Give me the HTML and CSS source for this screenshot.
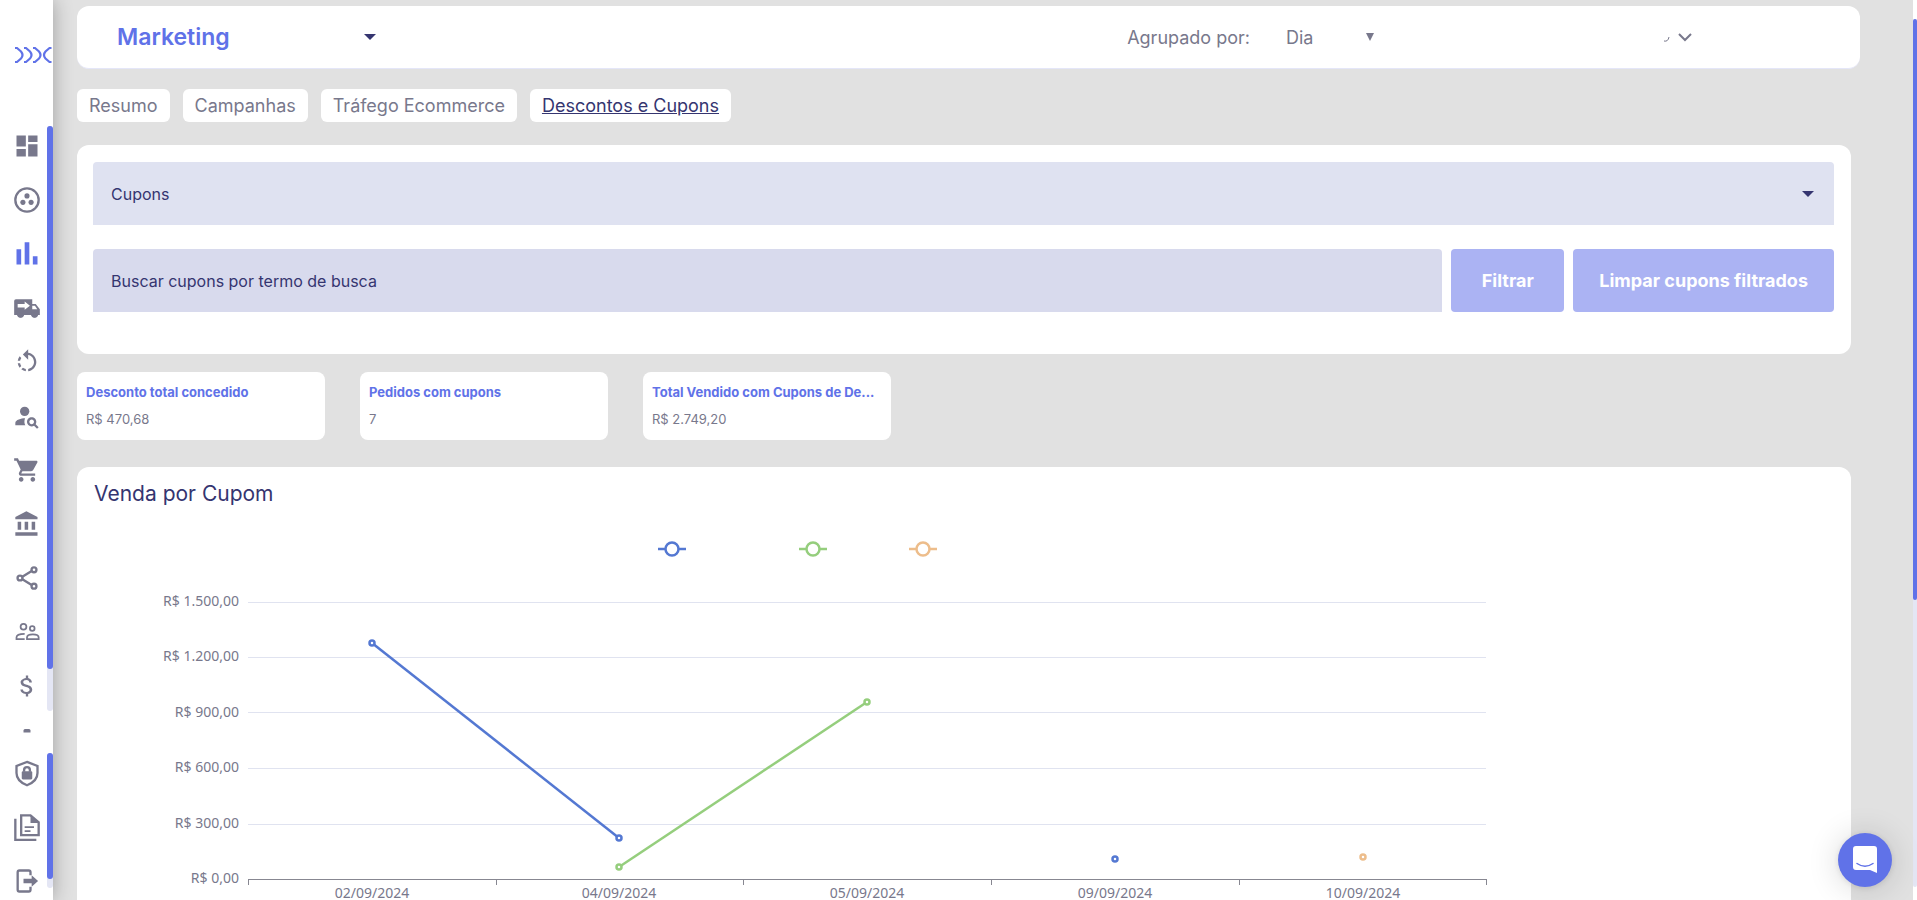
FILE: index.html
```html
<!DOCTYPE html>
<html lang="pt-BR">
<head>
    <meta charset="UTF-8">
    <meta name="viewport" content="width=device-width, initial-scale=1.0">
    <title>Marketing</title>
    <link rel="stylesheet" href="styles.css">
</head>
<body>
    <div class="page">
        <aside class="sidebar">
            <a class="logo" href="#" aria-label="Home">
                <svg width="38" height="18" viewBox="0 0 38 18" fill="none" stroke="#6072e8" stroke-width="2.200"><path d="M0 2h2l4 3.500q3 3.500 0 7L2 16H0M9 2h2l4 3.500q3 3.500 0 7L11 16H9M18 2h2l4 3.500q3 3.500 0 7L20 16h-2M36.500 2h-2l-4 3.500q-3 3.500 0 7l4 3.500h2"/></svg>
            </a>
            <nav class="menu menu-main">
                <div class="menu-items">
                    <a href="#" aria-label="Dashboard"><svg viewBox="0 0 24 24"><path d="M3 12.500h8V3H3zM3 21h8v-6.500H3zM13 21h8V10.500h-8zM13 3v5.500h8V3z"/></svg></a>
                    <a href="#" aria-label="Grupos"><svg viewBox="0 0 24 24"><circle class="line" cx="12" cy="12" r="10"/><circle cx="12" cy="8.500" r="2.200"/><circle cx="8.500" cy="14" r="2.200"/><circle cx="15.500" cy="14" r="2.200"/></svg></a>
                    <a href="#" aria-label="Marketing" class="active"><svg viewBox="0 0 24 24"><path d="M3 8h4v13H3zM10 2h4v19h-4zM17 14h4v7h-4z"/></svg></a>
                    <a href="#" aria-label="Entregas"><svg viewBox="0 0 24 24"><path fill-rule="evenodd" d="M2.500 4.500h14v4h3l3.500 4.500v5h-1.600a3 3 0 0 1-5.800 0H9.400a3 3 0 0 1-5.800 0H1V6q0-1.500 1.500-1.500zM10 6.500v2H4v3h6v2l4.500-3.500zM16.500 10v3h4.300l-2-3z"/><circle class="line thin" cx="6.500" cy="17.300" r="2.200"/><circle class="line thin" cx="18.500" cy="17.300" r="2.200"/></svg></a>
                    <a href="#" aria-label="Devoluções"><svg viewBox="0 0 24 24"><path d="M7.110 8.530L5.700 7.110C4.800 8.270 4.240 9.610 4.070 11h2.020c.14-.87.49-1.720 1.020-2.470zM6.090 13H4.070c.17 1.390.72 2.730 1.620 3.890l1.410-1.420c-.52-.75-.87-1.590-1.010-2.470zm1.010 5.320c1.160.9 2.510 1.440 3.900 1.610V17.900c-.87-.15-1.710-.49-2.460-1.030L7.100 18.320zM13 4.070V1L8.450 5.550 13 10V6.090c2.840.48 5 2.940 5 5.910s-2.160 5.430-5 5.910v2.020c3.950-.49 7-3.850 7-7.930s-3.050-7.440-7-7.930z"/></svg></a>
                    <a href="#" aria-label="Clientes"><svg viewBox="0 -2 24 24"><circle cx="10" cy="6" r="4"/><path d="M10.350 12.010C7.620 11.910 2 13.270 2 16v2h8.540c-1.470-2.760-.23-5.890-.19-5.990z"/><path d="M19.430 17.020c.36-.59.57-1.280.57-2.020 0-2.210-1.790-4-4-4s-4 1.790-4 4 1.790 4 4 4c.74 0 1.430-.22 2.020-.57L20.590 21 22 19.590zM16 17c-1.100 0-2-.9-2-2s.9-2 2-2 2 .9 2 2-.9 2-2 2z"/></svg></a>
                    <a href="#" aria-label="Pedidos"><svg viewBox="0 0 24 24"><path d="M7 18c-1.100 0-1.990.9-1.990 2S5.900 22 7 22s2-.9 2-2-.9-2-2-2zM1 2v2h2l3.600 7.590-1.350 2.450c-.16.28-.25.61-.25.96 0 1.100.9 2 2 2h12v-2H7.420c-.14 0-.25-.11-.25-.25l.03-.12.9-1.630h7.450c.75 0 1.410-.41 1.750-1.030l3.580-6.490c.08-.14.12-.31.12-.48 0-.55-.45-1-1-1H5.210l-.94-2H1zm16 16c-1.100 0-1.990.9-1.990 2s.89 2 1.990 2 2-.9 2-2-.9-2-2-2z"/></svg></a>
                    <a href="#" aria-label="Financeiro"><svg viewBox="0 0 24 24"><path d="M4 10v7h3v-7H4zm6 0v7h3v-7h-3zM2 22h19v-3H2v3zm14-12v7h3v-7h-3zm-4.500-9L2 6v2h19V6l-9.500-5z"/></svg></a>
                    <a href="#" aria-label="Canais"><svg viewBox="0 0 24 24"><g class="line"><circle cx="6" cy="12" r="2.100"/><circle cx="18" cy="5" r="2.100"/><circle cx="18" cy="19" r="2.100"/><path d="M8 11l8-5M8 13l8 5"/></g></svg></a>
                    <a href="#" aria-label="Equipe"><svg viewBox="0 0 24 24"><g class="line thin"><circle cx="9" cy="7.500" r="2.500"/><circle cx="16.500" cy="9" r="2"/><path d="M10 18H3v-1.500q0-3 7-3M12 18v-1.200q0-2.800 5-2.800t5 2.800V18z"/></g></svg></a>
                    <a href="#" aria-label="Custos"><svg viewBox="0 0 24 24"><path d="M11.800 10.900c-2.270-.59-3-1.200-3-2.150 0-1.090 1.010-1.850 2.700-1.850 1.780 0 2.440.85 2.500 2.100h2.210c-.07-1.720-1.120-3.300-3.210-3.810V3h-2v2.160C9 5.580 6.500 6.840 6.500 8.770c0 2.310 1.910 3.460 4.700 4.130 2.500.6 3 1.480 3 2.410 0 .69-.49 1.790-2.700 1.790-2.060 0-2.870-.92-2.980-2.100h-2.200c.12 2.190 1.760 3.420 4.680 3.830V21h2v-2.150c1.950-.37 3.500-1.500 3.500-3.550 0-2.840-2.430-3.810-4.700-4.400z"/></svg></a>
                    <a href="#" aria-label="Mais"><svg viewBox="0 0 24 24"><path d="M10 2.500h4l1 1v2H9v-2z"/></svg></a>
                </div>
                <div class="track"><div class="thumb"></div></div>
            </nav>
            <nav class="menu menu-bottom">
                <div class="menu-items">
                    <a href="#" aria-label="Privacidade"><svg viewBox="0 0 24 24"><path class="line" d="M12 2.500l9 3.500v6q0 7-9 10.500Q3 19 3 12V6z"/><rect x="7.500" y="10.500" width="9" height="7" rx="1"/><path class="line" d="M9.500 11V9.500a2.500 2.500 0 0 1 5 0V11"/></svg></a>
                    <a href="#" aria-label="Documentos"><svg viewBox="0 0 24 24"><path class="line" d="M2 5v18h18M7 2h8l7 6v11H7z"/><path d="M15 2v6.500h7z"/><path class="line thin" d="M10 12h8M10 15.500h5"/></svg></a>
                    <a href="#" aria-label="Sair"><svg viewBox="0 0 24 24"><path class="line" d="M15 7V4.500q0-1.500-1.500-1.500h-8Q4 3 4 4.500v15Q4 21 5.500 21h8q1.500 0 1.500-1.500V17"/><path d="M9 10h7V7l5.500 5-5.500 5v-3H9z"/></svg></a>
                </div>
                <div class="track"><div class="thumb"></div></div>
            </nav>
        </aside>

        <main class="content">
            <header class="topbar">
                <h1>Marketing</h1>
                <button class="store" aria-label="Selecionar loja"><svg width="12" height="6"><path d="M0 0h12L6 6z" fill="#353570"/></svg></button>
                <label for="group">Agrupado por:</label>
                <div class="group-select">
                    <select id="group">
                        <option>Dia</option>
                        <option>Mês</option>
                    </select>
                    <svg width="8" height="8"><path d="M0 0h8L4 8z" fill="#78788c"/></svg>
                </div>
                <button class="user" aria-label="Conta"><svg width="30" height="14" viewBox="0 0 30 14" fill="none" stroke="#78788c"><path d="M2 11q4 1 5-4"/><path d="M17 4l6 6 6-6" stroke-width="2"/></svg></button>
            </header>

            <nav class="tabs">
                <a href="#">Resumo</a>
                <a href="#">Campanhas</a>
                <a href="#">Tráfego Ecommerce</a>
                <a href="#" class="selected">Descontos e Cupons</a>
            </nav>

            <form class="card filters">
                <div class="coupon-select">
                    <select aria-label="Cupons">
                        <option>Cupons</option>
                    </select>
                    <svg width="12" height="6"><path d="M0 0h12L6 6z" fill="#353570"/></svg>
                </div>
                <div class="search-row">
                    <input type="text" aria-label="Buscar cupons por termo de busca" placeholder="Buscar cupons por termo de busca">
                    <button type="button">Filtrar</button>
                    <button type="button">Limpar cupons filtrados</button>
                </div>
            </form>

            <section class="stats">
                <div class="stat">
                    <h3>Desconto total concedido</h3>
                    <p>R$ 470,68</p>
                </div>
                <div class="stat">
                    <h3>Pedidos com cupons</h3>
                    <p>7</p>
                </div>
                <div class="stat">
                    <h3>Total Vendido com Cupons de De...</h3>
                    <p>R$ 2.749,20</p>
                </div>
            </section>

            <section class="card chart-card">
                <h2>Venda por Cupom</h2>
                <svg class="chart" viewBox="0 0 1740 400" role="img" aria-label="Venda por Cupom">
                    <!-- legend -->
                    <g class="legend">
                        <g class="blue"><path d="M564 23h28"/><circle cx="578" cy="23" r="6.500"/></g>
                        <g class="green"><path d="M705 23h28"/><circle cx="719" cy="23" r="6.500"/></g>
                        <g class="orange"><path d="M815 23h28"/><circle cx="829" cy="23" r="6.500"/></g>
                    </g>
                    <!-- y axis -->
                    <path class="grid" d="M154 76.500h1238M154 131.500h1238M154 186.500h1238M154 242.500h1238M154 298.500h1238"/>
                    <g class="y-labels">
                        <text x="145" y="80">R$ 1.500,00</text>
                        <text x="145" y="135">R$ 1.200,00</text>
                        <text x="145" y="191">R$ 900,00</text>
                        <text x="145" y="246">R$ 600,00</text>
                        <text x="145" y="302">R$ 300,00</text>
                        <text x="145" y="357">R$ 0,00</text>
                    </g>
                    <!-- x axis -->
                    <path class="axis" d="M154 353.500h1238M154.500 353v6M402.500 353v6M649.500 353v6M897.500 353v6M1145.500 353v6M1392.500 353v6"/>
                    <g class="x-labels">
                        <text x="278" y="372">02/09/2024</text>
                        <text x="525" y="372">04/09/2024</text>
                        <text x="773" y="372">05/09/2024</text>
                        <text x="1021" y="372">09/09/2024</text>
                        <text x="1269" y="372">10/09/2024</text>
                    </g>
                    <!-- series -->
                    <g class="blue"><path d="M278 117L525 312"/><circle cx="278" cy="117" r="2.500"/><circle cx="525" cy="312" r="2.500"/><circle cx="1021" cy="333" r="2.500"/></g>
                    <g class="green"><path d="M525 341L773 176"/><circle cx="525" cy="341" r="2.500"/><circle cx="773" cy="176" r="2.500"/></g>
                    <g class="orange"><circle cx="1269" cy="331" r="2.500"/></g>
                </svg>
            </section>
        </main>

        <div class="page-scroll"><div class="page-track"><div class="page-thumb"></div></div></div>

        <button class="chat" aria-label="Abrir chat">
            <svg width="26" height="28" viewBox="0 0 26 28"><path d="M4 0h18q3 0 3 3v24l-7-3H4q-3 0-3-3V3q0-3 3-3z" fill="#fff"/><path d="M5 17.500q8 5.500 16 0" fill="none" stroke="#6072e8" stroke-width="1.500" stroke-linecap="round"/></svg>
        </button>
    </div>
</body>
</html>
```
FILE: styles.css
```css
* {
    box-sizing: border-box;
}
body {
    margin: 0;
    font-family: Inter, "Liberation Sans", sans-serif;
    background: #e1e1e1;
    color: #78788c;
}
h1, h2, h3, p {
    margin: 0;
}
button, select, input {
    font-family: inherit;
    border: none;
}
.page {
    display: flex;
    height: 100vh;
    overflow: hidden;
}

/* sidebar */
.sidebar {
    display: flex;
    flex-direction: column;
    flex: none;
    width: 53px;
    background: #fff;
    box-shadow: 0 0 20px rgba(0, 0, 0, 0.3);
}
.logo {
    flex: none;
    height: 126px;
    padding: 46px 0 0 15px;
}
.logo svg {
    display: block;
}
.menu {
    display: flex;
    flex: none;
    justify-content: space-between;
    overflow: hidden;
}
.menu-main {
    height: 627px;
}
.menu-bottom {
    height: 147px;
}
.menu-items {
    display: flex;
    flex-direction: column;
    gap: 26px;
    padding: 6px 0 0 13px;
}
.menu-items a {
    height: 28px;
    color: #78788c;
}
.menu-items .active {
    color: #6072e8;
}
.menu-items svg {
    display: block;
    width: 28px;
    height: 28px;
    fill: currentColor;
}
.menu-items .line {
    fill: none;
    stroke: currentColor;
    stroke-width: 2;
}
.menu-items .thin {
    stroke-width: 1.5;
}
.track {
    width: 6px;
    height: 585px;
    border-radius: 3px;
    background: #e4e6f4;
}
.thumb {
    height: 543px;
    border-radius: 3px;
    background: #6072e8;
}
.menu-bottom .track {
    height: 135px;
}
.menu-bottom .thumb {
    height: 126px;
}

/* content */
.content {
    flex: 1;
    min-width: 0;
    padding: 6px 53px 0 24px;
}
.topbar {
    display: flex;
    align-items: center;
    height: 63px;
    padding: 0 168px 0 40px;
    background: #fff;
    border-bottom: 1px solid #e4e6f8;
    border-radius: 12px;
    font-size: 18px;
}
.topbar h1 {
    font-size: 23px;
    font-weight: 600;
    color: #6072e8;
}
.topbar button {
    padding: 0;
    background: none;
}
.topbar svg {
    display: block;
}
.store {
    width: 146px;
}
.store svg {
    margin-left: auto;
}
.topbar label {
    margin-left: auto;
    margin-right: 36px;
}
.group-select {
    display: grid;
    align-items: center;
    width: 88px;
    margin-right: 288px;
}
.group-select select,
.group-select svg {
    grid-area: 1 / 1;
}
.group-select svg {
    justify-self: end;
    pointer-events: none;
}
select {
    width: 100%;
    appearance: none;
    background: none;
    font-size: 18px;
    color: #78788c;
    padding: 0;
}
.tabs {
    display: flex;
    gap: 13px;
    margin-top: 20px;
}
.tabs a {
    padding: 0 12px;
    border-radius: 6px;
    background: #fff;
    font-size: 18px;
    line-height: 33px;
    color: #78788c;
    text-decoration: none;
}
.tabs .selected {
    color: #353570;
    text-decoration: underline;
}
.card {
    margin-right: 9px;
    padding: 17px 17px 0 16px;
    border-radius: 12px;
    background: #fff;
}
.filters {
    display: flex;
    flex-direction: column;
    gap: 24px;
    height: 209px;
    margin-top: 23px;
}
.coupon-select {
    display: grid;
    align-items: center;
    height: 63px;
    border-radius: 4px 4px 0 0;
    background: #dfe2f1;
}
.coupon-select select,
.coupon-select svg {
    grid-area: 1 / 1;
}
.coupon-select select {
    height: 63px;
    padding: 0 18px;
    font-size: 16px;
    color: #353570;
}
.coupon-select svg {
    justify-self: end;
    margin-right: 20px;
    pointer-events: none;
}
.search-row {
    display: flex;
    gap: 9px;
}
.search-row input {
    flex: 1;
    min-width: 0;
    height: 63px;
    padding: 0 18px;
    border-radius: 4px 4px 0 0;
    background: #d8daed;
    font-size: 16px;
}
.search-row input::placeholder {
    color: #353570;
}
.search-row button {
    min-width: 113px;
    padding: 0 26px;
    border-radius: 4px;
    background: #abb3f3;
    color: #fff;
    font-size: 18px;
    font-weight: 700;
}
.stats {
    display: flex;
    gap: 35px;
    margin-top: 18px;
}
.stat {
    width: 248px;
    height: 68px;
    padding: 10px 9px;
    border-radius: 8px;
    background: #fff;
    font-size: 13px;
}
.stat h3 {
    white-space: nowrap;
    font-size: 13px;
    font-weight: 700;
    line-height: 20px;
    color: #6072e8;
}
.stat p {
    margin-top: 7px;
    line-height: 20px;
}

/* chart */
.chart-card {
    margin-top: 27px;
    padding: 15px 17px 0;
}
.chart-card h2 {
    font-size: 21px;
    font-weight: 400;
    line-height: 24px;
    color: #353570;
}
.chart {
    display: block;
    width: 100%;
    margin-top: 20px;
    font-family: "Noto Sans", sans-serif;
    font-size: 14px;
}
.chart text {
    fill: #78788c;
}
.chart path {
    fill: none;
    stroke-width: 2.5;
}
.chart circle {
    fill: #fff;
    stroke-width: 2.5;
}
.chart .grid {
    stroke: #e0e3f0;
    stroke-width: 1;
}
.chart .axis {
    stroke: #878791;
    stroke-width: 1;
}
.y-labels {
    text-anchor: end;
}
.x-labels {
    text-anchor: middle;
}
.blue {
    stroke: #5478d2;
}
.green {
    stroke: #95ce7d;
}
.orange {
    stroke: #edbd8b;
}

/* scrollbar and chat */
.page-scroll {
    flex: none;
    width: 4px;
    padding: 19px 0 13px;
    background: #fff;
}
.page-track {
    height: 100%;
    border-radius: 2px;
    background: #e4e6f4;
}
.page-thumb {
    height: 581px;
    border-radius: 2px;
    background: #6072e8;
}
.chat {
    position: fixed;
    right: 25px;
    bottom: 13px;
    display: flex;
    align-items: center;
    justify-content: center;
    width: 54px;
    height: 54px;
    padding: 0;
    border-radius: 50%;
    background: #6072e8;
    box-shadow: 0 1px 6px rgba(0, 0, 0, 0.1), 0 2px 32px rgba(0, 0, 0, 0.16);
}
```
